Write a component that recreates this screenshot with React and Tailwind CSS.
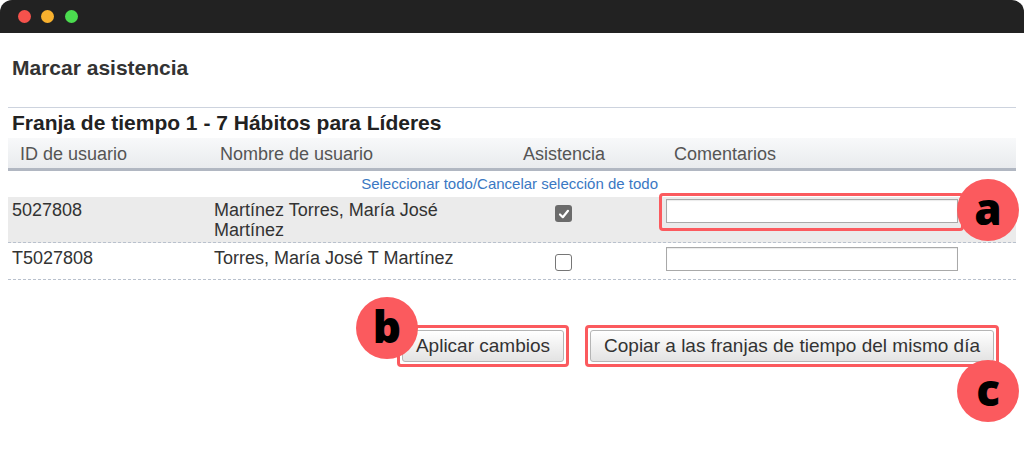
import React from "react";

const Badge = ({ letter, className }) => (
  <div
    className={`absolute flex h-[62px] w-[62px] items-center justify-center rounded-full bg-[#fb5a5e] font-['Open_Sans',sans-serif] text-[44px] font-extrabold leading-none text-black ${className}`}
  >
    <span className="-mt-[4px]">{letter}</span>
  </div>
);

const Checkbox = ({ checked }) =>
  checked ? (
    <div className="flex h-[17px] w-[17px] items-center justify-center rounded-[3px] bg-[#6b6b6b]">
      <svg width="12" height="12" viewBox="0 0 12 12" fill="none">
        <path d="M2 6.5 L4.8 9.2 L10 2.8" stroke="white" strokeWidth="2.2" strokeLinecap="round" strokeLinejoin="round" />
      </svg>
    </div>
  ) : (
    <div className="h-[17px] w-[17px] rounded-[3px] border-[1.5px] border-[#767676] bg-white" />
  );

const rows = [
  { id: "5027808", name: "Martínez Torres, María José Martínez", checked: true },
  { id: "T5027808", name: "Torres, María José T Martínez", checked: false },
];

export default function App() {
  return (
    <div className="min-h-screen overflow-hidden bg-white font-['Liberation_Sans',Arial,sans-serif] text-[#333]">
      {/* title bar */}
      <div className="flex h-[33px] items-center gap-[10px] rounded-t-[12px] bg-[#222222] pl-[18px]">
        <span className="h-[13px] w-[13px] rounded-full bg-[#f5524c]" />
        <span className="h-[13px] w-[13px] rounded-full bg-[#f8b12e]" />
        <span className="ml-[1px] h-[13px] w-[13px] rounded-full bg-[#4bdc4f]" />
      </div>

      <div className="px-2">
        <h1 className="pl-1 pt-[23px] text-[21px] font-bold leading-6 text-[#333]">Marcar asistencia</h1>
        <div className="mt-[27px] border-t border-[#cdd3de]" />
        <h2 className="mt-[3px] pl-1 text-[21px] font-bold leading-6 text-[#222]">
          Franja de tiempo 1 - 7 Hábitos para Líderes
        </h2>

        {/* header */}
        <div className="mt-[3px] grid h-[33px] grid-cols-[201px_259px_194px_1fr] items-center border-b-[3px] border-[#b1b7c2] bg-gradient-to-b from-[#f8f9fa] to-[#e9ebee] pt-[2px] text-[18px] text-[#555]">
          <div className="pl-3">ID de usuario</div>
          <div className="pl-[11px]">Nombre de usuario</div>
          <div className="pr-[2px] text-center">Asistencia</div>
          <div className="pl-3">Comentarios</div>
        </div>

        <div className="h-[26px] pr-[358px] text-right text-[15px] leading-[26px] text-[#3a78c3]">
          Seleccionar todo/Cancelar selección de todo
        </div>

        {rows.map((r, i) => (
          <div
            key={r.id}
            className={`grid grid-cols-[201px_259px_194px_1fr] items-start border-b border-dashed border-[#b9c1cd] text-[18px] leading-5 text-[#333] ${
              i === 0 ? "bg-[#ebebeb] pb-[2px] pt-[2px]" : "pb-[8px] pt-[4px]"
            }`}
          >
            <div className="pl-1 pt-[1px]">{r.id}</div>
            <div className="pl-[5px] pr-1 pt-[1px]">{r.name}</div>
            <div className={`flex justify-center pr-[3px] ${i === 0 ? "pt-[6px]" : "pt-[7px]"}`}>
              <Checkbox checked={r.checked} />
            </div>
            <div className="pl-1">
              <div className="relative w-[292px]">
                <div className="h-[24px] w-[292px] border border-[#a9a9a9] bg-white shadow-[inset_0_1px_1px_rgba(0,0,0,0.08)]" />
                {i === 0 && (
                  <>
                    <div className="pointer-events-none absolute -bottom-[8px] -left-[7px] -right-[6px] -top-[6px] rounded-[4px] border-[3px] border-[#fb5a5e]" />
                    <Badge letter="a" className="-top-[20px] left-[291px]" />
                  </>
                )}
              </div>
            </div>
          </div>
        ))}

        {/* actions */}
        <div className="mt-[45px] flex justify-end gap-4 pr-[17px]">
          <div className="relative rounded-[4px] border-[3px] border-[#fb5a5e] p-[2px]">
            <button className="h-[32px] rounded-[3px] border border-[#b5b5b5] bg-gradient-to-b from-white to-[#e3e3e3] px-[13px] text-[19px] text-[#333]">
              Aplicar cambios
            </button>
            <Badge letter="b" className="-left-[44px] -top-[31px]" />
          </div>
          <div className="relative rounded-[4px] border-[3px] border-[#fb5a5e] p-[2px]">
            <button className="h-[32px] rounded-[3px] border border-[#b5b5b5] bg-gradient-to-b from-white to-[#e3e3e3] px-[13px] text-[19px] text-[#333]">
              Copiar a las franjas de tiempo del mismo día
            </button>
            <Badge letter="c" className="-right-[23px] top-[32px]" />
          </div>
        </div>
      </div>
    </div>
  );
}
